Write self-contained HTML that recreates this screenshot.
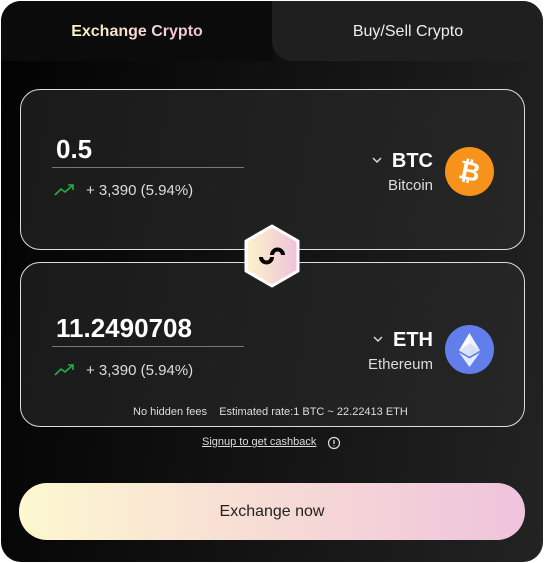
<!DOCTYPE html>
<html><head><style>
*{margin:0;padding:0;box-sizing:border-box}
body{width:544px;height:563px;background:#fff;font-family:"Liberation Sans",sans-serif;position:relative;overflow:hidden}
.wrap{position:absolute;left:1px;top:1px;width:542px;height:561px;border-radius:20px;background:linear-gradient(100deg,#020202 0%,#121212 50%,#232323 100%);overflow:hidden}
.tabL{position:absolute;left:0;top:0;width:272px;height:60px;background:#0b0b0b;text-align:center;line-height:62px;font-size:16px;font-weight:bold;}
.tabL span{background:linear-gradient(90deg,#fdf5c9,#f0c0dc);-webkit-background-clip:text;color:transparent}
.tabR{position:absolute;left:271px;top:0;width:272px;height:60px;background:#1f1f1f;border-bottom-left-radius:20px;text-align:center;line-height:62px;font-size:16px;color:#eee}
.card{position:absolute;left:19px;width:505px;border:1px solid #ddd;border-radius:20px;background:linear-gradient(100deg,#1a1a1a,#262626)}
.num{position:absolute;left:35px;font-size:26px;font-weight:bold;color:#fff}
.line{position:absolute;left:31px;width:192px;height:1px;background:#777}
.chg{position:absolute;left:33px;font-size:15px;color:#ddd}
.chg svg{vertical-align:-2px;margin-right:10px}
.sym{position:absolute;right:91px;font-size:20px;font-weight:bold;color:#fff}
.sym svg{margin-right:10px;vertical-align:4px}
.name{position:absolute;right:91px;font-size:15px;color:#ddd}
.coin{position:absolute;right:30px;width:49px;height:49px;border-radius:50%}
.small{position:absolute;font-size:11px;color:#ddd}
.btn{position:absolute;left:18px;top:482px;width:506px;height:57px;border-radius:28px;background:linear-gradient(90deg,#fdf8d0,#f8e0d4 40%,#efc3dc);text-align:center;line-height:57px;font-size:16px;color:#222}
</style></head><body><div class="wrap">
<div class="tabL"><span>Exchange Crypto</span></div>
<div class="tabR">Buy/Sell Crypto</div>

<div class="card" style="top:88px;height:161px">
<div class="num" style="top:44px">0.5</div>
<div class="line" style="top:77px"></div>
<div class="chg" style="top:92px"><svg width="22" height="14" viewBox="0 0 22 14"><path d="M1 12 L7 6 L11 9 L19 2 M14 2 H19 V7" stroke="#1db341" stroke-width="1.6" fill="none"/></svg>+ 3,390 (5.94%)</div>
<div class="sym" style="top:60px"><svg width="10" height="6" viewBox="0 0 10 6"><path d="M1 1 L5 5 L9 1" stroke="#ddd" stroke-width="1.4" fill="none"/></svg>BTC</div>
<div class="name" style="top:87px">Bitcoin</div>
<div class="coin" style="top:57px;background:#f7931a"><svg width="49" height="49" viewBox="0 0 49 49"><text x="24.5" y="33" text-anchor="middle" font-family="Liberation Sans" font-weight="bold" font-size="26" fill="#fff" transform="rotate(12 24.5 24.5)">₿</text></svg></div>
</div>

<div class="card" style="top:261px;height:165px">
<div class="num" style="top:50px">11.2490708</div>
<div class="line" style="top:83px"></div>
<div class="chg" style="top:99px"><svg width="22" height="14" viewBox="0 0 22 14"><path d="M1 12 L7 6 L11 9 L19 2 M14 2 H19 V7" stroke="#1db341" stroke-width="1.6" fill="none"/></svg>+ 3,390 (5.94%)</div>
<div class="sym" style="top:66px"><svg width="10" height="6" viewBox="0 0 10 6"><path d="M1 1 L5 5 L9 1" stroke="#ddd" stroke-width="1.4" fill="none"/></svg>ETH</div>
<div class="name" style="top:93px">Ethereum</div>
<div class="coin" style="top:62px;background:#627eea"><svg width="49" height="49" viewBox="0 0 49 49"><path d="M24.5 8 L35 25.5 L24.5 31.5 L14 25.5Z" fill="#fff" opacity=".9"/><path d="M24.5 8 L24.5 31.5 L14 25.5Z" fill="#fff"/><path d="M24.5 33.5 L35 27.5 L24.5 42 L14 27.5Z" fill="#fff" opacity=".85"/><path d="M24.5 18 L35 25.5 L24.5 31.5 L14 25.5Z" fill="#c8d1f7" opacity=".6"/></svg></div>
<div class="small" style="left:112px;top:143px">No hidden fees&nbsp;&nbsp;&nbsp;&nbsp;Estimated rate:1 BTC ~ 22.22413 ETH</div>
</div>

<svg style="position:absolute;left:242px;top:223px" width="58" height="64" viewBox="0 0 58 64"><defs><linearGradient id="g" x1="0" x2="1"><stop offset="0" stop-color="#fbf3c8"/><stop offset="1" stop-color="#efc2dc"/></linearGradient></defs><path d="M29 2 L55 17 L55 47 L29 62 L3 47 L3 17Z" fill="url(#g)" stroke="#fff" stroke-width="3" stroke-linejoin="round"/><path d="M18 33 A5.5 5.5 0 0 0 29 33 M29 31 A5.5 5.5 0 0 1 40 31" stroke="#000" stroke-width="4" fill="none" stroke-linecap="butt"/></svg>

<div class="small" style="left:201px;top:435px;text-decoration:underline">Signup to get cashback</div>
<svg style="position:absolute;left:326px;top:435px" width="14" height="14" viewBox="0 0 14 14"><circle cx="7" cy="7" r="5.5" stroke="#ddd" stroke-width="1.2" fill="none"/><path d="M7 4 V8 M7 9.5 V10.3" stroke="#ddd" stroke-width="1.3"/></svg>

<div class="btn">Exchange now</div>
</div></body></html>
